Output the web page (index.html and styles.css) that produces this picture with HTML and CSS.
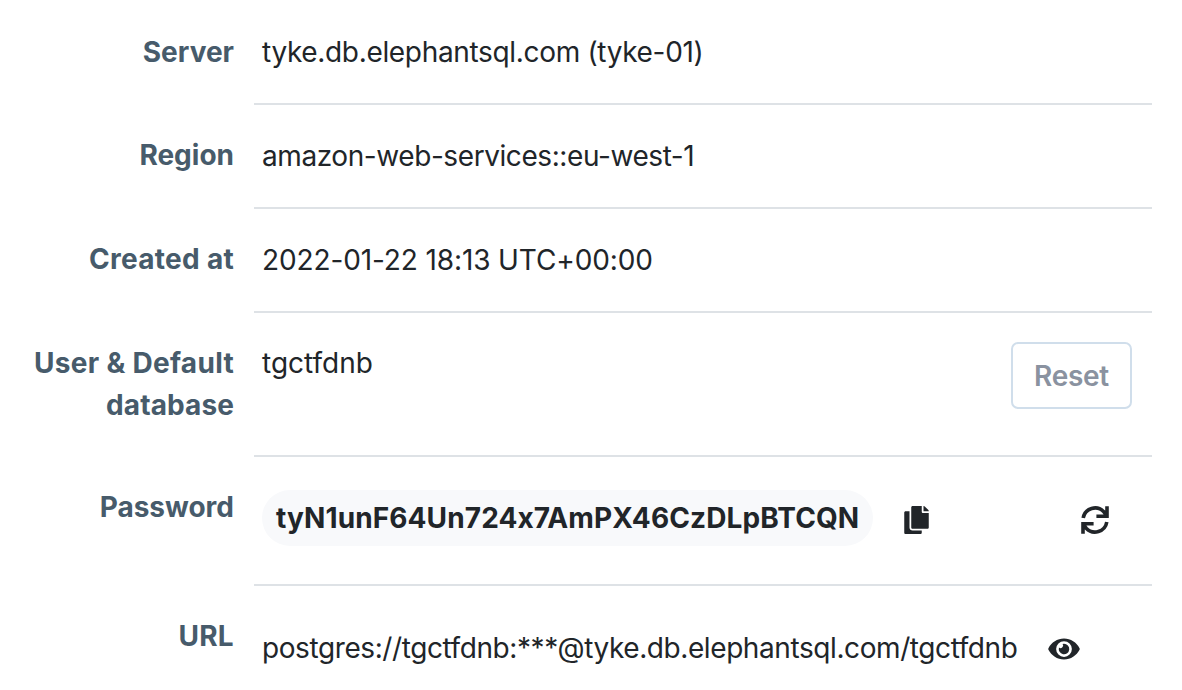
FILE: index.html
```html
<!DOCTYPE html>
<html lang="en">
<head>
<meta charset="utf-8">
<title>Instance details</title>
<link rel="stylesheet" href="styles.css">
</head>
<body>
<dl class="details">
  <div class="row"><dt class="label label-server">Server</dt><dd class="value"><span class="text server">tyke.db.elephantsql.com (tyke-01)</span></dd></div>
  <div class="row"><dt class="label">Region</dt><dd class="value"><span class="text region">amazon-web-services::eu-west-1</span></dd></div>
  <div class="row"><dt class="label label-wide">Created at</dt><dd class="value"><span class="text created">2022-01-22 18:13 UTC+00:00</span></dd></div>
  <div class="row row-user"><dt class="label label-wide">User &amp; Default <span class="label-line">database</span></dt><dd class="value"><span class="text user">tgctfdnb</span><button class="reset">Reset</button></dd></div>
  <div class="row row-password"><dt class="label">Password</dt><dd class="value"><span class="secret">tyN1unF64Un724x7AmPX46CzDLpBTCQN</span>
    <svg class="icon copy" viewBox="0 0 448 512"><path fill="currentColor" d="M320 448v40c0 13.255-10.745 24-24 24H24c-13.255 0-24-10.745-24-24V120c0-13.255 10.745-24 24-24h72v296c0 30.879 25.121 56 56 56h168zm0-344V0H152c-13.255 0-24 10.745-24 24v368c0 13.255 10.745 24 24 24h272c13.255 0 24-10.745 24-24V128H344c-13.2 0-24-10.8-24-24zm120.971-31.029L375.029 7.029A24 24 0 0 0 358.059 0H352v96h96v-6.059a24 24 0 0 0-7.029-16.97z"/></svg>
    <svg class="icon rotate" viewBox="0 0 28 28"><g fill="none" stroke="currentColor" stroke-width="3.6"><path d="M2.2 12A12 12 0 0 1 22.8 5.8L25.4 9M26 .2V10.3H15.4"/><path d="M25.8 16A12 12 0 0 1 5.2 22.2L2.6 19M2 27.8V17.7H12.6"/></g></svg></dd></div>
  <div class="row row-url"><dt class="label label-wide">URL</dt><dd class="value"><span class="text url">postgres://tgctfdnb:***@tyke.db.elephantsql.com/tgctfdnb</span>
    <svg class="icon eye" viewBox="0 0 576 512"><path fill="currentColor" d="M572.52 241.4C518.29 135.59 410.93 64 288 64S57.68 135.64 3.48 241.41a32.35 32.35 0 0 0 0 29.19C57.71 376.41 165.07 448 288 448s230.32-71.64 284.52-177.41a32.35 32.35 0 0 0 0-29.19zM288 400a144 144 0 1 1 144-144 143.93 143.93 0 0 1-144 144zm0-240a95.31 95.31 0 0 0-25.31 3.79 47.85 47.85 0 0 1-66.9 66.9A95.78 95.78 0 1 0 288 160z"/></svg></dd></div>
</dl>
</body>
</html>
```
FILE: styles.css
```css
* { box-sizing: border-box; }
body { margin: 0; background: #fff; overflow: hidden; font-family: Inter, sans-serif; font-size: 28px; line-height: 42px; color: #212529; font-feature-settings: "calt" 0; }
.details { margin: 0; padding-left: 14px; width: 1152px; }
.row { display: grid; grid-template-columns: 240px 898px; height: 104px; }
.label { padding: 29px 20px 0 0; text-align: right; font-weight: 700; color: #475b6b; }
.label-server { padding-top: 31px; }
.label-wide { letter-spacing: 0.3px; }
.label-line { letter-spacing: 0.1px; }
.value { margin: 0; padding: 30px 20px 0 8px; border-bottom: 2px solid #dee2e6; display: flex; align-items: flex-start; white-space: nowrap; }
.row:first-child { height: 105px; }
.row:first-child .value { padding-top: 31px; }
.row-user { height: 144px; }
.row-password { height: 129px; }
.row-url { height: 104px; }
.row-user .value { padding-top: 29px; }
.row-password .value { padding-top: 33px; }
.server { letter-spacing: -0.33px; }
.region { letter-spacing: -0.42px; }
.created { letter-spacing: -0.12px; }
.url { letter-spacing: -0.41px; }
.reset { margin-left: auto; width: 121px; height: 67px; padding: 0; border: 2px solid #d0deeb; border-radius: 7px; background: #fff; font: 600 28px/42px Inter, sans-serif; letter-spacing: -0.3px; color: #8a92a0; }
.secret { height: 56px; padding: 0 14px; border-radius: 28px; background: #f8f9fb; font-weight: 700; line-height: 56px; letter-spacing: 0.11px; }
.icon { flex: none; }
.copy { width: 25px; height: 28px; margin: 16px 0 0 31px; }
.rotate { width: 28px; height: 28px; margin: 16px 23px 0 auto; }
.eye { width: 32px; height: 28px; margin: 8px 0 0 31px; }
.row-url .value { border: 0; padding-top: 41px; }
```
